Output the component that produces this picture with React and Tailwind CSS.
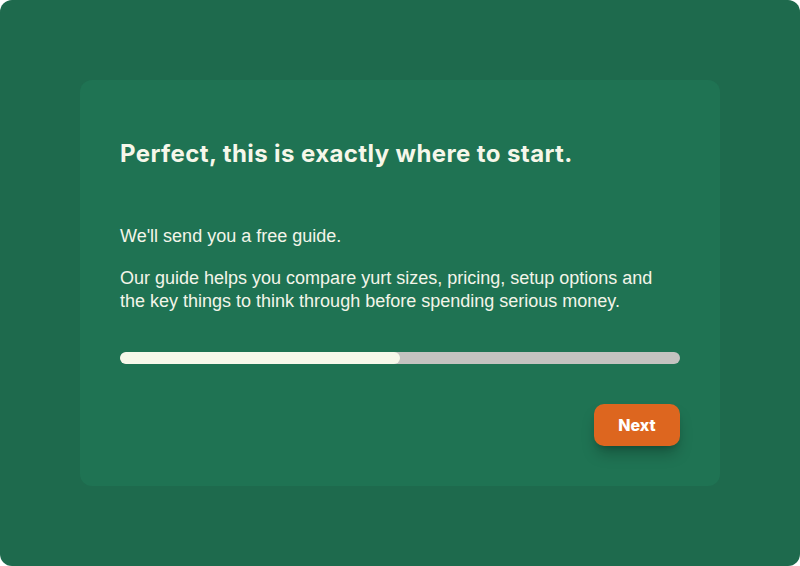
import React from "react";

const App = () => {
  const progress = 50;

  return (
    <div className="w-[800px] h-[566px] bg-white">
      <div className="flex items-center justify-center w-full h-full rounded-xl bg-[#1e6a4d]">
        <section className="w-[640px] h-[406px] rounded-xl bg-[#1f7353] px-10 pb-10 pt-[58px] flex flex-col">
          <h1
            className="text-[24px] leading-[32px] font-bold tracking-[0.4px] text-[#f6f7ea]"
            style={{ fontFamily: "Inter, 'Noto Sans', sans-serif" }}
          >
            Perfect, this is exactly where to start.
          </h1>

          <div
            className="mt-[55px] text-[18px] leading-[23px] text-[#f3f5e9]"
            style={{ fontFamily: "'Liberation Sans', Arial, sans-serif" }}
          >
            <p>We'll send you a free guide.</p>
            <p className="mt-[19px]">
              Our guide helps you compare yurt sizes, pricing, setup options and
              the key things to think through before spending serious money.
            </p>
          </div>

          <div className="mt-[39px] h-3 w-full rounded-full bg-[#c4c3c0] overflow-hidden">
            <div
              className="h-full rounded-full bg-[#f7f8ea]"
              style={{ width: `${progress}%` }}
            />
          </div>

          <div className="flex justify-end mt-10">
            <button
              className="h-[42px] w-[86px] rounded-[10px] bg-[#dd661f] text-white text-[16px] font-extrabold shadow-lg shadow-black/25"
              style={{ fontFamily: "Inter, 'Noto Sans', sans-serif" }}
            >
              Next
            </button>
          </div>
        </section>
      </div>
    </div>
  );
};

export default App;
